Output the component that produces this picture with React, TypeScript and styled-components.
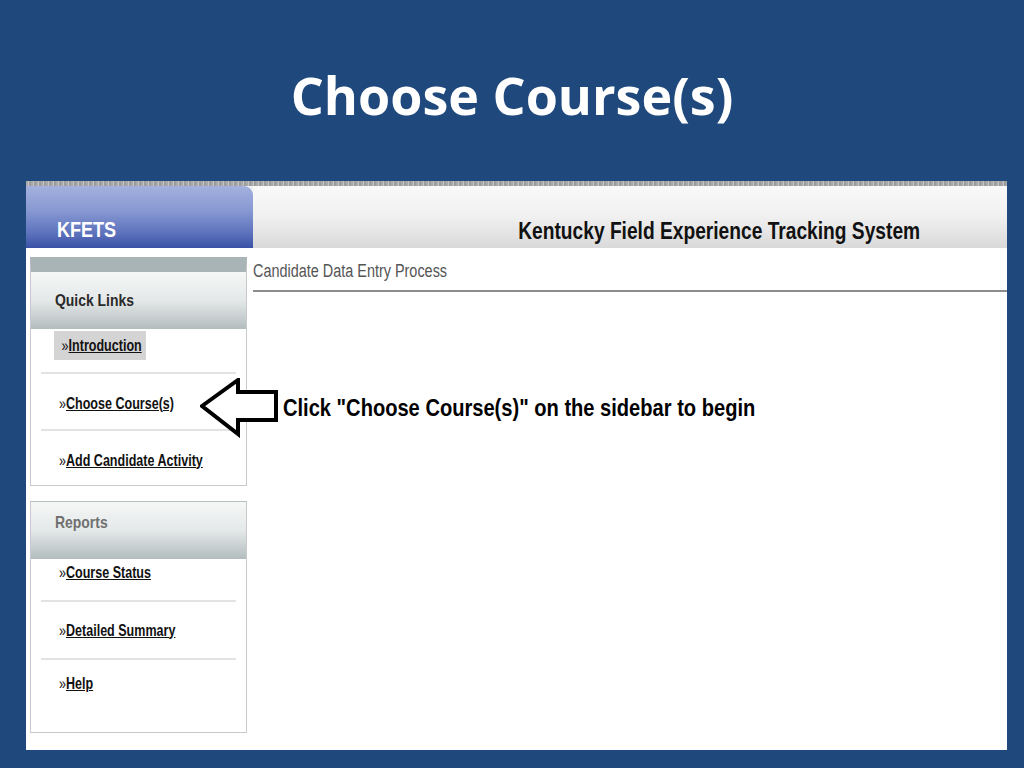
import React from 'react'
import styled, {createGlobalStyle} from 'styled-components'

const GlobalStyle = createGlobalStyle`
  html, body {
    margin: 0;
    padding: 0;
    background: #1f497d;
  }
`

// no Arial Narrow here, so squeeze Liberation Sans horizontally
const narrowFont = `"Liberation Sans", Arial, sans-serif`

const Narrow = styled.span<{$origin?: string}>`
  display: inline-block;
  white-space: nowrap;
  transform: scaleX(0.82);
  transform-origin: ${p => p.$origin || 'left'} center;
`

const Slide = styled.div`
  width: 1024px;
  height: 768px;
  background: #1f497d;
  display: flex;
  flex-direction: column;
  overflow: hidden;
`

const Title = styled.h1`
  margin: 0;
  height: 181px;
  display: flex;
  align-items: center;
  justify-content: center;
  padding-top: 8px;
  box-sizing: border-box;
  color: #fff;
  font-family: "Open Sans", "Liberation Sans", sans-serif;
  font-weight: 700;
  font-size: 52px;
`

const Shot = styled.div`
  width: 981px;
  height: 569px;
  margin-left: 26px;
  background: #fff;
  display: flex;
  flex-direction: column;
  position: relative;
`

const NoiseStrip = styled.div`
  height: 5px;
  background: repeating-linear-gradient(90deg, #a9a9a9 0 2px, #c4c4c4 2px 3px, #9c9c9c 3px 5px);
`

const Header = styled.div`
  display: flex;
  height: 62px;
  background: #f2f2f2;
`

const Tab = styled.div`
  width: 227px;
  border-top-right-radius: 9px;
  background: linear-gradient(180deg, #a3b1de 0%, #8798d2 40%, #5a70bb 78%, #3a51a5 100%);
  color: #fff;
  font-family: ${narrowFont};
  font-weight: 700;
  font-size: 22px;
  display: flex;
  align-items: flex-end;
  padding: 0 0 5px 31px;
  box-sizing: border-box;
`

const HeaderBar = styled.div`
  flex: 1;
  background: linear-gradient(180deg, #f9f9f9 0%, #f0f0f0 50%, #d9d9d9 100%);
  display: flex;
  align-items: flex-end;
  justify-content: flex-end;
  padding: 0 87px 3px 0;
  font-family: ${narrowFont};
  font-weight: 700;
  font-size: 23.4px;
  color: #111;
`

const Body = styled.div`
  flex: 1;
  display: flex;
`

const Sidebar = styled.div`
  width: 227px;
  padding: 9px 6px 0 4px;
  box-sizing: border-box;
  display: flex;
  flex-direction: column;
  gap: 15px;
`

const Panel = styled.div<{$cap?: boolean}>`
  border: 1px solid #c9c9c9;
  border-top: ${p => (p.$cap ? '15px solid #a9b4b6' : '1px solid #b8bfc0')};
  display: flex;
  flex-direction: column;
`

const PanelHead = styled.div<{$muted?: boolean}>`
  height: 57px;
  background: linear-gradient(180deg, #f6f7f7 0%, #e4e8e8 50%, #b3bdbe 100%);
  display: flex;
  align-items: center;
  padding: 0 0 ${p => (p.$muted ? 16 : 0)}px 24px;
  box-sizing: border-box;
  font-family: ${narrowFont};
  font-size: 17px;
  font-weight: 700;
  color: ${p => (p.$muted ? '#707070' : '#2a2a2a')};
`

const LinkRow = styled.div<{$last?: boolean; $h: number; $lift?: number; $drop?: number}>`
  height: ${p => p.$h}px;
  margin: 0 10px;
  border-bottom: ${p => (p.$last ? 'none' : '2px solid #e3e3e3')};
  display: flex;
  align-items: center;
  padding: ${p => p.$drop || 0}px 0 ${p => p.$lift || 0}px 18px;
  box-sizing: border-box;
`

const SideLink = styled.a<{$active?: boolean}>`
  display: inline-block;
  white-space: nowrap;
  transform: scaleX(0.76);
  transform-origin: left center;
  font-family: ${narrowFont};
  font-weight: 700;
  font-size: 16.5px;
  color: #111;
  text-decoration: underline;
  background: ${p => (p.$active ? '#d4d4d4' : 'transparent')};
  padding: ${p => (p.$active ? '5px 6px 5px 10px' : '0')};
  margin-left: ${p => (p.$active ? '-5px' : '0')};
  span {
    text-decoration: none;
    display: inline-block;
    font-weight: 400;
  }
`

const Main = styled.div`
  flex: 1;
  display: flex;
  flex-direction: column;
`

const Crumb = styled.div`
  height: 44px;
  border-bottom: 2px solid #8c8c8c;
  padding: 13px 0 0 0;
  box-sizing: border-box;
  font-family: ${narrowFont};
  font-size: 17.6px;
  color: #555;
`

const Callout = styled.div`
  position: absolute;
  left: 174px;
  top: 197px;
  display: flex;
  align-items: center;
  gap: 4px;
  font-family: ${narrowFont};
  font-weight: 700;
  font-size: 24.5px;
  color: #000;
`

const Arrow = () => (
  <svg width="79" height="60" viewBox="0 0 79 60">
    <path
      d="M2 28 L38 2 L38 14 L76 14 L76 42 L38 42 L38 56 Z"
      fill="#fff"
      stroke="#000"
      strokeWidth="4"
      strokeLinejoin="miter"
    />
  </svg>
)

const Link = ({label, active}: {label: string; active?: boolean}) => (
  <SideLink $active={active}><span>»</span>{label}</SideLink>
)

export default function App() {
  return (
    <Slide>
      <GlobalStyle />
      <Title>Choose Course(s)</Title>
      <Shot>
        <NoiseStrip />
        <Header>
          <Tab><Narrow>KFETS</Narrow></Tab>
          <HeaderBar><Narrow $origin="right">Kentucky Field Experience Tracking System</Narrow></HeaderBar>
        </Header>
        <Body>
          <Sidebar>
            <Panel $cap>
              <PanelHead><Narrow>Quick Links</Narrow></PanelHead>
              <LinkRow $h={45} $lift={11}><Link label="Introduction" active /></LinkRow>
              <LinkRow $h={57} $drop={4}><Link label="Choose Course(s)" /></LinkRow>
              <LinkRow $h={54} $drop={4} $last><Link label="Add Candidate Activity" /></LinkRow>
            </Panel>
            <Panel>
              <PanelHead $muted><Narrow>Reports</Narrow></PanelHead>
              <LinkRow $h={43} $lift={14}><Link label="Course Status" /></LinkRow>
              <LinkRow $h={58}><Link label="Detailed Summary" /></LinkRow>
              <LinkRow $h={72} $lift={26} $last><Link label="Help" /></LinkRow>
            </Panel>
          </Sidebar>
          <Main>
            <Crumb><Narrow>Candidate Data Entry Process</Narrow></Crumb>
          </Main>
        </Body>
        <Callout>
          <Arrow />
          <Narrow>Click "Choose Course(s)" on the sidebar to begin</Narrow>
        </Callout>
      </Shot>
    </Slide>
  )
}
